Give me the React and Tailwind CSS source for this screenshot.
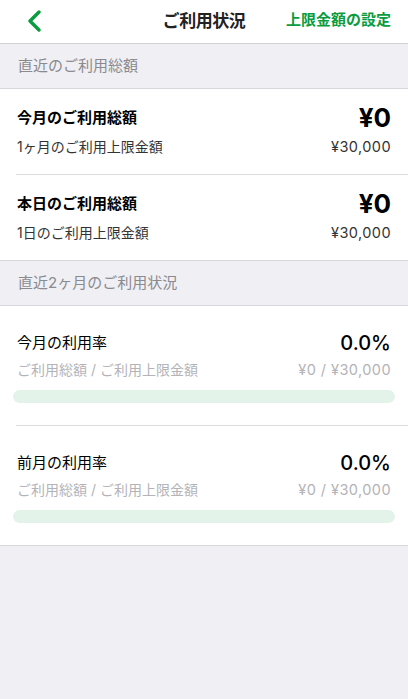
export default function App() {
  const font = { fontFamily: '"Inter", "Noto Sans CJK JP", sans-serif' }

  return (
    <div className="min-h-[699px] bg-[#efeff4] text-black" style={font}>
      {/* Nav bar */}
      <div className="relative flex h-[44px] items-center border-b border-[#d1d1d6] bg-white">
        <button className="absolute left-[22px] top-[8px] flex h-[26px] w-[24px] items-center justify-center">
          <svg width="16" height="22" viewBox="0 0 16 22" fill="none">
            <path d="M13 2 L4 11 L13 20" stroke="#0b9c3f" strokeWidth="3.4" strokeLinecap="round" strokeLinejoin="round" />
          </svg>
        </button>
        <div className="w-full text-center text-[17px] font-bold leading-none tracking-tight text-[#222]">ご利用状況</div>
        <div className="absolute right-[17px] top-[12px] text-[15px] font-bold leading-none text-[#0b9c3f]">上限金額の設定</div>
      </div>

      {/* Section 1 */}
      <div className="flex h-[44px] items-center px-[18px] text-[15px] text-[#8a8a8f]">直近のご利用総額</div>
      <div className="border-y border-[#d8d8dc] bg-white">
        {[
          { title: "今月のご利用総額", sub: "1ヶ月のご利用上限金額" },
          { title: "本日のご利用総額", sub: "1日のご利用上限金額" },
        ].map((row, i) => (
          <div key={row.title}>
            {i > 0 && <div className="ml-[16px] h-px bg-[#dcdce0]" />}
            <div className="flex h-[85px] flex-col justify-center px-[17px]">
              <div className="flex h-[22px] items-center justify-between">
                <span className="text-[15px] font-bold leading-[22px]">{row.title}</span>
                <span className="text-[26px] font-bold leading-none">¥0</span>
              </div>
              <div className="mt-[8px] flex h-[20px] items-center justify-between text-[14px] leading-[20px] text-[#333]">
                <span>{row.sub}</span>
                <span className="text-[14.5px] tracking-[0.03em]">¥30,000</span>
              </div>
            </div>
          </div>
        ))}
      </div>

      {/* Section 2 */}
      <div className="flex h-[44px] items-center px-[18px] text-[15px] text-[#8a8a8f]">直近2ヶ月のご利用状況</div>
      <div className="border-y border-[#d8d8dc] bg-white">
        {["今月の利用率", "前月の利用率"].map((label, i) => (
          <div key={label}>
            {i > 0 && <div className="ml-[16px] h-px bg-[#dcdce0]" />}
            <div className="h-[119px] pt-[26px]">
              <div className="flex h-[22px] items-center justify-between px-[17px]">
                <span className="text-[15px] leading-[22px]">{label}</span>
                <span className="text-[20px] font-medium leading-none">0.0%</span>
              </div>
              <div className="mt-[6px] flex h-[20px] items-center justify-between px-[17px] text-[14px] leading-[20px] text-[#b3b3b8]">
                <span>ご利用総額 / ご利用上限金額</span>
                <span className="text-[14.5px] tracking-[0.03em]">¥0 / ¥30,000</span>
              </div>
              <div className="mx-[13px] mt-[10px] h-[13px] rounded-full bg-[#e4f3ea]" />
            </div>
          </div>
        ))}
      </div>
    </div>
  )
}
